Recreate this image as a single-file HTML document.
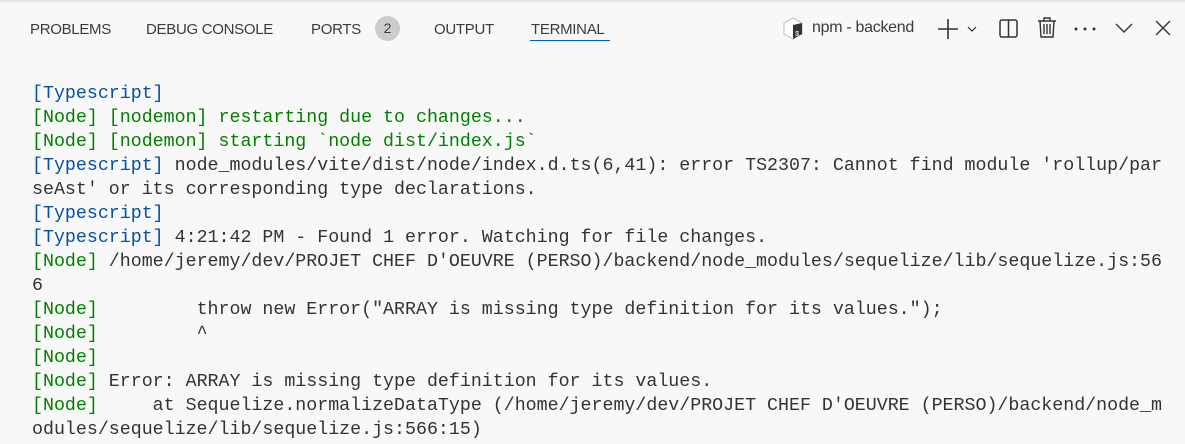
<!DOCTYPE html>
<html><head><meta charset="utf-8"><style>
*{margin:0;padding:0;box-sizing:border-box}
body{width:1185px;height:444px;background:#f8f8f8;overflow:hidden;position:relative;font-family:"Liberation Sans",sans-serif}
.top{position:absolute;left:0;top:0;width:1185px;height:2px;background:#e5e5e5}
.tab{position:absolute;top:21px;font-size:15px;color:#3b3b3b;letter-spacing:-0.3px}
.badge{position:absolute;left:375px;top:16px;width:25px;height:25px;border-radius:50%;background:#cccccc;color:#3b3b3b;font-size:14px;text-align:center;line-height:25px}
.ul{position:absolute;left:530px;top:40px;width:80px;height:1px;background:#005fb8}
.term{position:absolute;left:32px;top:82px;font-family:"Liberation Mono",monospace;font-size:18.3px;line-height:24px;color:#333;white-space:pre}
.b{color:#0451a5}.g{color:#008000}
svg{position:absolute}
</style></head><body>
<div class="top"></div>
<div class="tab" style="left:30px">PROBLEMS</div>
<div class="tab" style="left:146px">DEBUG CONSOLE</div>
<div class="tab" style="left:311px">PORTS</div>
<div class="badge">2</div>
<div class="tab" style="left:434px">OUTPUT</div>
<div class="tab" style="left:531px">TERMINAL</div>
<div class="ul"></div>
<svg style="left:782px;top:17px" width="22" height="24" viewBox="0 0 22 24"><path d="M11 1 L20 6 L20 17 L11 22 L2 17 L2 6 Z" fill="#fff" stroke="#bbb"/><path d="M11 8 L20 6 L20 17 L11 22 Z" fill="#333"/><text x="13" y="19" font-size="7" fill="#fff" font-family="Liberation Mono">$</text></svg>
<div class="tab" style="left:812px;font-size:16px;top:19px">npm - backend</div>
<svg style="left:937px;top:18px" width="50" height="22"><path d="M11 1V21M1 11H21" stroke="#333" stroke-width="1.6"/><path d="M31 9l4 4 4-4" stroke="#333" fill="none" stroke-width="1.2"/></svg>
<svg style="left:998px;top:18px" width="22" height="22"><rect x="2" y="2" width="17" height="17" rx="2" fill="none" stroke="#333" stroke-width="1.5"/><path d="M10.5 2V19" stroke="#333" stroke-width="1.5"/></svg>
<svg style="left:1036px;top:16px" width="22" height="24"><path d="M2 5H20M8 5V2H14V5M4 5L5 21H17L18 5M8 8V18M11 8V18M14 8V18" stroke="#333" fill="none" stroke-width="1.4"/></svg>
<svg style="left:1073px;top:25px" width="24" height="8"><circle cx="3" cy="4" r="1.5" fill="#333"/><circle cx="12" cy="4" r="1.5" fill="#333"/><circle cx="21" cy="4" r="1.5" fill="#333"/></svg>
<svg style="left:1114px;top:20px" width="20" height="16"><path d="M2 4l8 8 8-8" stroke="#333" fill="none" stroke-width="1.4"/></svg>
<svg style="left:1154px;top:19px" width="18" height="18"><path d="M2 2L16 16M16 2L2 16" stroke="#333" stroke-width="1.4"/></svg>
<div class="term"><span class="b">[Typescript]</span>
<span class="g">[Node] [nodemon] restarting due to changes...</span>
<span class="g">[Node] [nodemon] starting `node dist/index.js`</span>
<span class="b">[Typescript]</span> node_modules/vite/dist/node/index.d.ts(6,41): error TS2307: Cannot find module 'rollup/par
seAst' or its corresponding type declarations.
<span class="b">[Typescript]</span>
<span class="b">[Typescript]</span> 4:21:42 PM - Found 1 error. Watching for file changes.
<span class="g">[Node]</span> /home/jeremy/dev/PROJET CHEF D'OEUVRE (PERSO)/backend/node_modules/sequelize/lib/sequelize.js:56
6
<span class="g">[Node]</span>         throw new Error("ARRAY is missing type definition for its values.");
<span class="g">[Node]</span>         ^
<span class="g">[Node]</span>
<span class="g">[Node]</span> Error: ARRAY is missing type definition for its values.
<span class="g">[Node]</span>     at Sequelize.normalizeDataType (/home/jeremy/dev/PROJET CHEF D'OEUVRE (PERSO)/backend/node_m
odules/sequelize/lib/sequelize.js:566:15)</div>
</body></html>
